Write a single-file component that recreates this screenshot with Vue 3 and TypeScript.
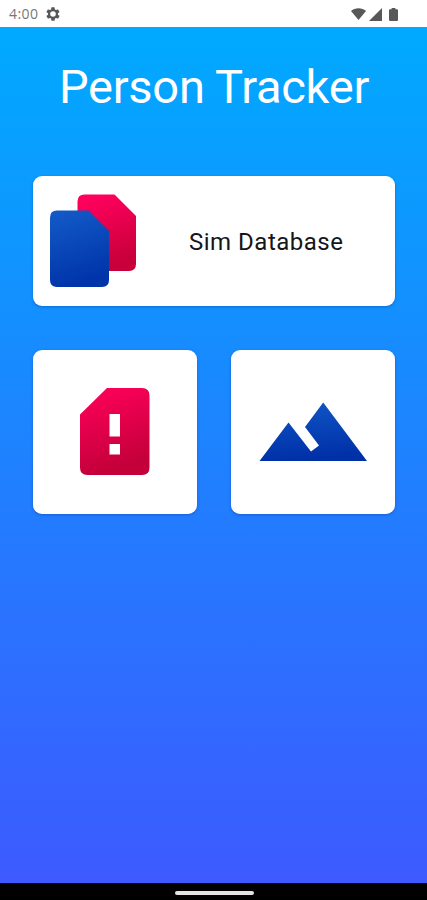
<script setup lang="ts">
interface Tile {
  id: string
  label: string
}

const title: string = 'Person Tracker'
const clock: string = '4:00'
const tiles: Tile[] = [
  { id: 'alert', label: 'Sim alert' },
  { id: 'terrain', label: 'Terrain' },
]
</script>

<template>
  <div class="screen">
    <header class="status">
      <div class="status-left">
        <span class="clock">{{ clock }}</span>
        <svg class="gear" viewBox="0 0 24 24">
          <path fill-rule="evenodd" d="M19.4 13a7.500 7.500 0 0 0 0-2l2.100-1.600a.5.5 0 0 0 .1-.6l-2-3.500a.5.5 0 0 0-.6-.2l-2.500 1a7.300 7.300 0 0 0-1.700-1l-.4-2.600A.5.5 0 0 0 14 2h-4a.5.5 0 0 0-.5.400l-.4 2.700a7.300 7.300 0 0 0-1.700 1l-2.500-1a.5.5 0 0 0-.6.200l-2 3.500a.5.5 0 0 0 .1.600L4.600 11a7.500 7.500 0 0 0 0 2l-2.200 1.600a.5.5 0 0 0-.1.600l2 3.500c.1.200.4.300.6.200l2.500-1c.5.400 1.100.700 1.700 1l.4 2.600c0 .3.2.5.5.5h4c.3 0 .5-.2.5-.4l.4-2.700a7.300 7.300 0 0 0 1.700-1l2.500 1c.2.1.5 0 .6-.2l2-3.500a.5.5 0 0 0-.1-.6zM12 16.200a4.200 4.200 0 1 1 0-8.400 4.200 4.200 0 0 1 0 8.400z" />
        </svg>
      </div>
      <div class="status-right">
        <svg width="15" height="12" viewBox="0 0 15 12"><path d="M0 3C4-.7 11-.7 15 3L7.500 12z" /></svg>
        <svg width="13" height="13" viewBox="0 0 13 13"><path d="M0 13L13 0V13z" /></svg>
        <svg class="battery" width="9" height="13" viewBox="0 0 8 13" preserveAspectRatio="none"><path d="M2.300 0H5.700V1.300H7Q8 1.300 8 2.300V12Q8 13 7 13H1Q0 13 0 12V2.300Q0 1.300 1 1.300H2.300z" /></svg>
      </div>
    </header>

    <main class="content">
      <h1 class="title">{{ title }}</h1>

      <section class="card wide">
        <svg class="sims" width="87" height="93" viewBox="0 0 87 93">
          <defs>
            <linearGradient id="simRed" x1="0" y1="0" x2="0.25" y2="1">
              <stop offset="0.1" stop-color="#ff005d" />
              <stop offset="1" stop-color="#c8003a" />
            </linearGradient>
            <linearGradient id="simBlue" x1="0" y1="0" x2="0.25" y2="1">
              <stop offset="0" stop-color="#145bc8" />
              <stop offset="1" stop-color="#0035aa" />
            </linearGradient>
          </defs>
          <path fill="url(#simRed)" d="M34.500 .5H64.500L86 22V70Q86 77 79 77H27.500V7.500Q27.500 .5 34.500 .5z" />
          <path fill="url(#simBlue)" d="M7 16.500H38.500L59 37V86Q59 93 52 93H7Q0 93 0 86V23.500Q0 16.500 7 16.500z" />
        </svg>
        <span class="label">Sim Database</span>
      </section>

      <div class="tiles">
        <section v-for="tile in tiles" :key="tile.id" class="card tile" :aria-label="tile.label">
          <svg v-if="tile.id === 'alert'" width="164" height="164" viewBox="0 0 164 164">
            <defs>
              <linearGradient id="alertRed" x1="0" y1="0" x2="0.25" y2="1">
                <stop offset="0.1" stop-color="#fb0058" />
                <stop offset="1" stop-color="#c3003a" />
              </linearGradient>
            </defs>
            <path fill="url(#alertRed)" fill-rule="evenodd" d="M74 38H109Q116.500 38 116.500 45.500V117.500Q116.500 125 109 125H54.500Q47 125 47 117.500V64.500zM76.500 64V86.500H87V64zM76.500 94V104.500H87V94z" />
          </svg>
          <svg v-else width="164" height="164" viewBox="0 0 164 164">
            <defs>
              <linearGradient id="peakBlue" x1="0" y1="0" x2="0.15" y2="1">
                <stop offset="0" stop-color="#1057c6" />
                <stop offset="1" stop-color="#0030a8" />
              </linearGradient>
            </defs>
            <path fill="url(#peakBlue)" d="M28.500 111L57.500 72.500L80 101.500L88 95.500L74 77L92.200 52.500L136 111z" />
          </svg>
        </section>
      </div>
    </main>

    <footer class="nav"><span class="handle"></span></footer>
  </div>
</template>

<style>
body {
  margin: 0;
}
</style>

<style scoped>
.screen {
  width: 427px;
  height: 900px;
  display: flex;
  flex-direction: column;
  overflow: hidden;
  font-family: Roboto, "Liberation Sans", sans-serif;
}

.status {
  box-sizing: border-box;
  height: 26.500px;
  flex: none;
  display: flex;
  justify-content: space-between;
  padding: 0 29px 0 9px;
  background: #fff;
  fill: #585858;
}

.status-left {
  display: flex;
  align-items: center;
  gap: 7px;
  padding-top: 2px;
}

.clock {
  color: #777;
  font-family: "Open Sans", "Noto Sans", sans-serif;
  font-size: 14px;
  letter-spacing: 0.4px;
  line-height: 20px;
}

.gear {
  width: 16px;
  height: 16px;
}

.status-right {
  display: flex;
  align-items: center;
  gap: 3px;
  padding-top: 2px;
}

.battery {
  margin-left: 4px;
}

.content {
  flex: 1;
  padding: 30.500px 32px 0 33px;
  background: linear-gradient(#00aaff, #3d5aff);
}

.title {
  margin: 0;
  height: 60px;
  font-size: 47px;
  font-weight: 400;
  letter-spacing: -0.25px;
  line-height: 60px;
  text-align: center;
  white-space: nowrap;
  color: #fff;
}

.card {
  background: #fff;
  border-radius: 9px;
  box-shadow: 0 1px 3px rgba(0, 40, 120, 0.35);
}

.wide {
  box-sizing: border-box;
  height: 130px;
  margin-top: 59px;
  padding: 0 0 2px 17px;
  display: flex;
  align-items: center;
}

.label {
  margin: 4px 0 0 52px;
  font-size: 24px;
  letter-spacing: 0.5px;
  line-height: 30px;
  white-space: nowrap;
  color: #161616;
}

.tiles {
  display: flex;
  justify-content: space-between;
  margin-top: 43.500px;
}

.tile {
  width: 164px;
  height: 164px;
}

.tile svg {
  display: block;
}

.nav {
  height: 17px;
  flex: none;
  display: flex;
  align-items: center;
  justify-content: center;
  background: #000;
}

.handle {
  width: 79px;
  height: 4px;
  margin: 2px 0 0 1px;
  border-radius: 2px;
  background: #e4e4e4;
}
</style>
